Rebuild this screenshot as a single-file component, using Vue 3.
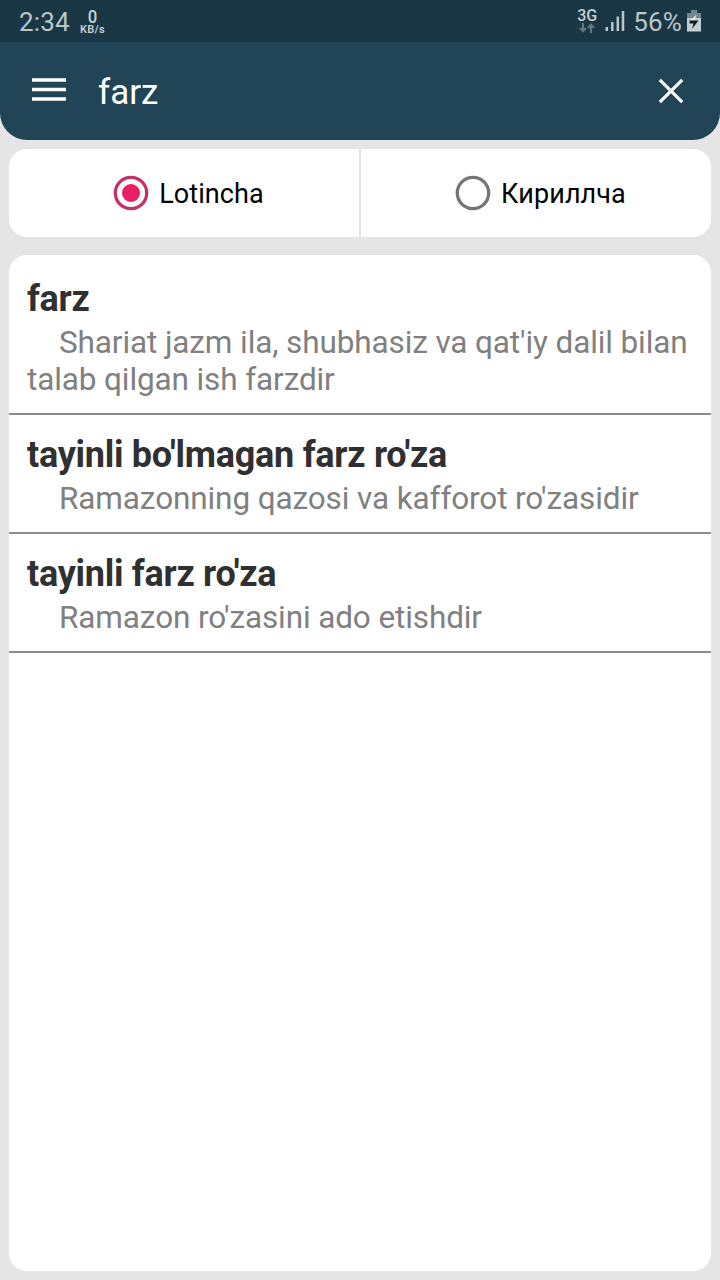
<script setup>
import { ref } from 'vue'

const query = ref('farz')
const script = ref('latin')
const scripts = [
  { id: 'latin', label: 'Lotincha' },
  { id: 'cyrillic', label: 'Кириллча' },
]
const entries = [
  { term: 'farz', text: "Shariat jazm ila, shubhasiz va qat'iy dalil bilan talab qilgan ish farzdir" },
  { term: "tayinli bo'lmagan farz ro'za", text: "Ramazonning qazosi va kafforot ro'zasidir" },
  { term: "tayinli farz ro'za", text: "Ramazon ro'zasini ado etishdir" },
]
</script>

<template>
  <div class="screen">
    <header class="header">
      <div class="status">
        <span class="clock">2:34</span>
        <div class="speed">
          <span class="speed-num">0</span>
          <span class="speed-unit">KB/s</span>
        </div>
        <span class="grow"></span>
        <div class="network">
          <span class="net-type">3G</span>
          <svg class="net-arrows" width="16" height="10" viewBox="0 0 16 10">
            <path d="M4 0V8M1 5L4 8.3L7 5M12 10V2M9 5L12 1.7L15 5" fill="none" stroke="#62777f" stroke-width="2" />
          </svg>
        </div>
        <svg class="signal" width="20" height="22" viewBox="0 0 20 22">
          <path d="M1.8 17V21M7.3 12V21M12.8 6.500V21M18 1V21" fill="none" stroke="#bac6ca" stroke-width="2.500" />
        </svg>
        <span class="percent">56%</span>
        <svg class="battery" width="14" height="22" viewBox="0 0 14 22">
          <path d="M4 0H10V3H14V9H0V3H4Z" fill="#74868d" />
          <path d="M0 8H14V21.500H0Z" fill="#c3ced1" />
          <path d="M9.500 4.500L3.500 10.500H7.500Z" fill="#e6edef" />
          <path d="M2.500 10.500H11.500L5 19L6.500 13.500H2.500Z" fill="#111c20" />
        </svg>
      </div>
      <div class="toolbar">
        <svg class="menu" width="34" height="24" viewBox="0 0 34 24">
          <path d="M0 2H34M0 11.500H34M0 21H34" stroke="#fff" stroke-width="3.700" />
        </svg>
        <span class="query">{{ query }}</span>
        <svg class="close" width="26" height="26" viewBox="0 0 26 26">
          <path d="M1.800 1.800L24.200 24.200M24.200 1.800L1.800 24.200" stroke="#fff" stroke-width="3.200" />
        </svg>
      </div>
    </header>

    <div class="switch">
      <div v-for="s in scripts" :key="s.id" class="option" @click="script = s.id">
        <svg width="36" height="36" viewBox="0 0 36 36">
          <circle cx="18" cy="18" r="15.700" fill="none" :stroke="script === s.id ? '#c3316a' : '#757575'" stroke-width="3.300" />
          <circle v-if="script === s.id" cx="18" cy="18" r="9" fill="#e91e63" />
        </svg>
        <span class="label">{{ s.label }}</span>
      </div>
    </div>

    <main class="list">
      <article v-for="e in entries" :key="e.term" class="entry">
        <h2 class="term">{{ e.term }}</h2>
        <p class="text">{{ e.text }}</p>
      </article>
    </main>
  </div>
</template>

<style>
body {
  background: #e5e5e5;
}
</style>

<style scoped>
.screen {
  box-sizing: border-box;
  width: 720px;
  height: 1280px;
  display: flex;
  flex-direction: column;
  padding-bottom: 9px;
  background: #e5e5e5;
  font-family: Roboto, "Liberation Sans", sans-serif;
}
.header {
  height: 140px;
  border-radius: 0 0 27px 27px;
  background: #214557;
  overflow: hidden;
}
.status {
  box-sizing: border-box;
  height: 42px;
  display: flex;
  align-items: center;
  padding: 2px 19px 0;
  background: #1a3745;
  color: #bac6ca;
}
.clock {
  font-size: 26px;
  letter-spacing: 0.2px;
}
.speed {
  display: flex;
  flex-direction: column;
  align-items: center;
  margin-left: 10px;
  font-weight: 500;
  color: #c6d0d4;
}
.speed-num {
  font-size: 19px;
  line-height: 15px;
  transform: scaleX(0.88);
}
.speed-unit {
  font-size: 11px;
  line-height: 12px;
  font-weight: 600;
  letter-spacing: 0.3px;
}
.grow {
  flex: 1;
}
.network {
  display: flex;
  flex-direction: column;
  align-items: center;
}
.net-type {
  font-size: 16px;
  line-height: 14px;
  font-weight: 500;
  color: #c6d0d4;
}
.net-arrows {
  margin-bottom: 2px;
}
.signal {
  margin-left: 8px;
  margin-bottom: 2px;
}
.percent {
  margin-left: 8px;
  font-size: 26px;
  letter-spacing: 0.2px;
}
.battery {
  margin-left: 5px;
  margin-bottom: 2px;
}
.toolbar {
  height: 98px;
  display: flex;
  align-items: center;
  padding: 0 36px 0 32px;
}
.menu {
  margin-bottom: 2px;
}
.query {
  flex: 1;
  margin-left: 32px;
  padding-top: 2px;
  color: #fff;
  font-size: 35px;
}
.switch {
  display: flex;
  height: 88px;
  margin: 9px 9px 0;
  border-radius: 18px;
  background: #fff;
}
.option {
  flex: 1;
  display: flex;
  align-items: center;
  justify-content: center;
  padding-left: 9px;
}
.option + .option {
  border-left: 2px solid #e2e2e2;
}
.label {
  margin-left: 10px;
  padding-top: 2px;
  font-size: 27px;
  letter-spacing: 0.100px;
  color: #000;
}
.list {
  flex: 1;
  margin: 18px 9px 0;
  padding-top: 4px;
  border-radius: 18px;
  background: #fff;
}
.entry {
  padding: 19px 18px 15px;
  border-bottom: 2px solid #8c8c8c;
}
.term {
  margin: 0;
  font-size: 36px;
  line-height: 42px;
  font-weight: 700;
  letter-spacing: -0.270px;
  color: #303030;
}
.text {
  margin: 4px 0 0;
  font-size: 31.500px;
  line-height: 37px;
  letter-spacing: -0.110px;
  text-indent: 32px;
  color: #808080;
}
</style>
